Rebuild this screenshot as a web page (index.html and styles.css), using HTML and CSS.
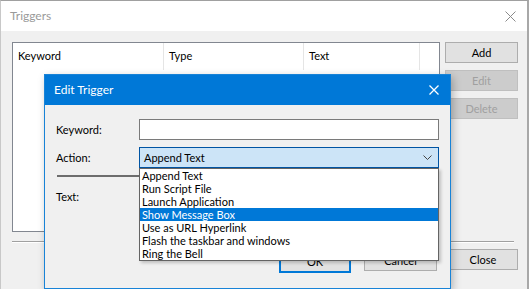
FILE: index.html
```html
<!DOCTYPE html>
<html lang="en">
<head>
    <meta charset="UTF-8">
    <title>Triggers</title>
    <link rel="stylesheet" href="styles.css">
</head>
<body>

    <div class="window">
        <!-- Triggers window -->
        <div class="titlebar">
            <span class="title">Triggers</span>
            <svg class="win-close" width="11" height="11" viewBox="0 0 11 11">
                <path d="M0.5 0.5 L10.5 10.5 M10.5 0.5 L0.5 10.5" stroke="#8a8a8a" stroke-width="1" fill="none"/>
            </svg>
        </div>
        <div class="window-body">
            <div class="top-row">
                <div class="list">
                    <div class="list-header">
                        <div class="col col-keyword">Keyword</div>
                        <div class="col col-type">Type</div>
                        <div class="col col-text">Text</div>
                        <div class="col col-rest"></div>
                    </div>
                </div>
                <div class="side-buttons">
                    <button class="btn">Add</button>
                    <button class="btn" disabled>Edit</button>
                    <button class="btn" disabled>Delete</button>
                </div>
            </div>
            <div class="separator"></div>
            <div class="bottom-row">
                <button class="btn close-btn">Close</button>
            </div>
        </div>

        <!-- Edit Trigger dialog -->
        <div class="dialog">
            <div class="dialog-titlebar">
                <span class="dialog-title">Edit Trigger</span>
                <svg class="dialog-close" width="10" height="10" viewBox="0 0 10 10">
                    <path d="M0.5 0.5 L9.5 9.5 M9.5 0.5 L0.5 9.5" stroke="#fff" stroke-width="1.3" fill="none"/>
                </svg>
            </div>
            <div class="dialog-body">
                <div class="form-row">
                    <label class="form-label">Keyword:</label>
                    <input type="text" class="text-input">
                </div>
                <div class="form-row">
                    <label class="form-label">Action:</label>
                    <div class="combo">
                        <span class="combo-value">Append Text</span>
                        <svg class="chevron" width="9" height="5" viewBox="0 0 9 5">
                            <path d="M0.5 0.5 L4.5 4.5 L8.5 0.5" stroke="#444" stroke-width="1" fill="none"/>
                        </svg>
                        <ul class="dropdown">
                            <li>Append Text</li>
                            <li>Run Script File</li>
                            <li>Launch Application</li>
                            <li class="selected">Show Message Box</li>
                            <li>Use as URL Hyperlink</li>
                            <li>Flash the taskbar and windows</li>
                            <li>Ring the Bell</li>
                        </ul>
                    </div>
                </div>
                <div class="rule"></div>
                <div class="form-row text-row">
                    <label class="form-label">Text:</label>
                    <div class="text-area"></div>
                </div>
                <div class="dialog-buttons">
                    <button class="btn ok-btn">OK</button>
                    <button class="btn">Cancel</button>
                </div>
            </div>
        </div>
    </div>

</body>
</html>
```

FILE: styles.css
```css
/* General Styles */
* {
    margin: 0;
    padding: 0;
    box-sizing: border-box;
    font-family: 'Lato', sans-serif;
    font-size: 11px;
}

body {
    width: 529px;
    height: 289px;
    overflow: hidden;
    background-color: #fff;
    color: #000;
}

.window {
    position: relative;
    height: 289px;
    border-top: 1px solid #a0a0a0;
    border-left: 1px solid #c8c8c8;
    border-right: 2px solid #a8a8a8;
    background-color: #f0f0f0;
}

.titlebar {
    height: 30px;
    background-color: #fff;
    display: flex;
    align-items: center;
    justify-content: space-between;
    padding: 0 11px 0 9px;
}

.title {
    color: #9a9a9a;
    font-size: 12px;
    padding-bottom: 1px;
}

.window-body {
    padding: 11px 8px 0 11px;
}

.top-row {
    display: flex;
    gap: 5px;
}

.list {
    width: 428px;
    height: 190px;
    border: 1px solid #828790;
    background-color: #fff;
}

.list-header {
    display: flex;
    height: 27px;
}

.col {
    padding: 6px 0 0 5px;
    border-right: 1px solid #e5e5e5;
}

.col-keyword { width: 151px; }
.col-type { width: 140px; }
.col-text { width: 116px; }
.col-rest { border-right: none; }

.side-buttons {
    display: flex;
    flex-direction: column;
    gap: 7px;
}

.btn {
    width: 73px;
    height: 21px;
    background-color: #e1e1e1;
    border: 1px solid #adadad;
    color: #000;
}

.btn:disabled {
    background-color: #cccccc;
    border-color: #bfbfbf;
    color: #a0a0a0;
}

.separator {
    margin-top: 9px;
    width: 502px;
    border-top: 1px solid #a0a0a0;
    border-bottom: 1px solid #fff;
}

.bottom-row {
    display: flex;
    justify-content: flex-end;
    padding: 6px 1px 0 0;
}

.close-btn {
    width: 70px;
}

/* Dialog */
.dialog {
    position: absolute;
    left: 43px;
    top: 73px;
    width: 407px;
    height: 215px;
    border: 1px solid #1883d7;
    background-color: #f0f0f0;
    box-shadow: 2px 3px 8px rgba(0, 0, 0, 0.25);
}

.dialog-titlebar {
    height: 30px;
    background-color: #0078d7;
    display: flex;
    align-items: center;
    justify-content: space-between;
    padding: 0 11px 0 9px;
}

.dialog-title {
    color: #fff;
    font-size: 12px;
    padding-bottom: 1px;
}

.dialog-body {
    padding: 14px 10px 0 11px;
}

.form-row {
    display: flex;
    align-items: center;
    margin-bottom: 7px;
}

.form-label {
    width: 83px;
}

.text-input {
    width: 300px;
    height: 21px;
    border: 1px solid #7a7a7a;
    background-color: #fff;
}

.combo {
    position: relative;
    width: 300px;
    height: 21px;
    border: 1px solid #0054a3;
    background-color: #cce4f7;
    display: flex;
    align-items: center;
    justify-content: space-between;
    padding: 0 6px 0 4px;
}

.chevron {
    margin-bottom: 1px;
}

.dropdown {
    position: absolute;
    left: -1px;
    top: 20px;
    width: 300px;
    height: 93px;
    list-style: none;
    background-color: #fff;
    border: 1px solid #646464;
    box-shadow: 2px 2px 3px rgba(0, 0, 0, 0.2);
    z-index: 2;
}

.dropdown li {
    height: 13px;
    line-height: 13px;
    padding-left: 2px;
    white-space: nowrap;
}

.dropdown li.selected {
    background-color: #0078d7;
    color: #fff;
}

.rule {
    width: 381px;
    height: 2px;
    margin: 1px 0 0 1px;
    background-color: #6d6d6d;
}

.text-row {
    align-items: flex-start;
    margin-top: 13px;
}

.text-area {
    width: 300px;
    height: 40px;
    background-color: #fff;
    border: 1px solid #7a7a7a;
}

.dialog-buttons {
    display: flex;
    justify-content: flex-end;
    gap: 13px;
    padding: 13px 3px 0 0;
}

.ok-btn {
    width: 72px;
    height: 23px;
    border: 2px solid #0078d7;
    background-color: #e1e1e1;
}
```
